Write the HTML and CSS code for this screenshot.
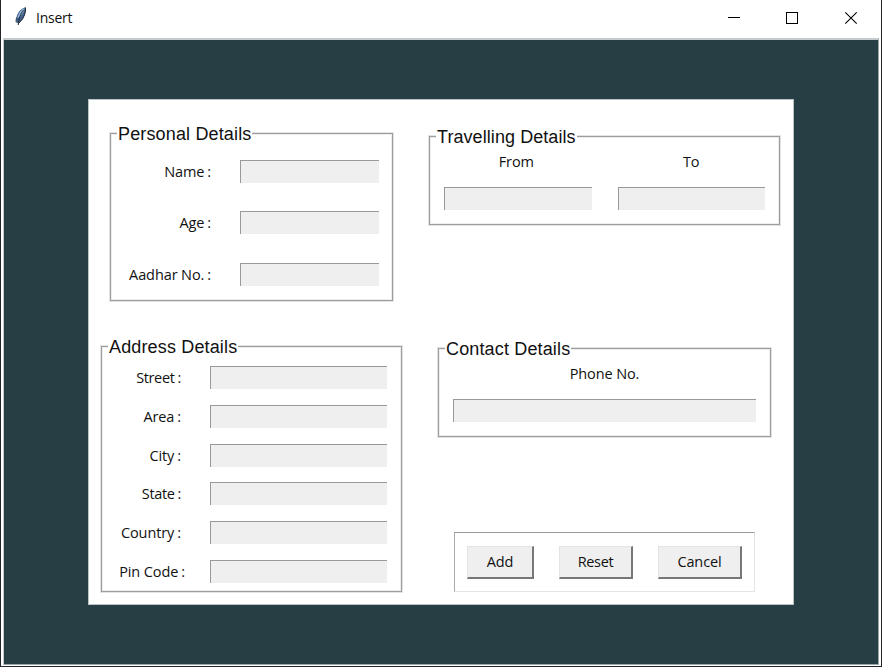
FILE: index.html
```html
<!DOCTYPE html>
<html lang="en">
<head>
<meta charset="utf-8">
<title>Insert</title>
<link rel="stylesheet" href="styles.css">
</head>
<body>
<div class="window">
  <header class="titlebar">
    <svg class="feather" width="14" height="22" viewBox="0 0 14 22">
      <path d="M11.500 1.200C7.500 2 3.600 6 2.600 11L2 15.500l2 1.500c3-1.500 5.500-4.500 6.500-8 .8-2.800 1.600-5.500 1-7.800z" fill="#42658f"/>
      <path d="M10.500 2C7 3.500 4.500 7 3.500 12l2.500-1 3.500-5z" fill="#9bbadc"/>
      <path d="M9.500 4C6.500 8 4.800 12 4.200 19M11.300 1.500c1 3-.8 8-2.800 11.500L5 17" fill="none" stroke="#172334" stroke-width="1"/>
      <path d="M2.500 11.500 2 15.500l1.500 1.500" fill="none" stroke="#30445c" stroke-width="1"/>
    </svg>
    <span class="title">Insert</span>
    <svg class="controls" width="131" height="14" viewBox="0 0 131 14" fill="none" stroke="#000">
      <path d="M0 6.500h12M58.500 1.500h11v11h-11z" shape-rendering="crispEdges"/>
      <path d="M117.300 1.300l11.400 11.400M128.700 1.300l-11.400 11.400" stroke-width="1.100"/>
    </svg>
  </header>
  <main class="client">
    <div class="panel">
      <div class="column left">
        <section class="group personal">
          <h2 class="legend">Personal Details</h2>
          <div class="rows">
            <label for="name">Name<i>:</i></label><input id="name">
            <label for="age">Age<i>:</i></label><input id="age">
            <label for="aadhar">Aadhar No.<i>:</i></label><input id="aadhar">
          </div>
        </section>
        <section class="group address">
          <h2 class="legend">Address Details</h2>
          <div class="rows">
            <label for="street" class="tight">Street<i>:</i></label><input id="street">
            <label for="area">Area<i>:</i></label><input id="area">
            <label for="city">City<i>:</i></label><input id="city">
            <label for="state" class="tight">State<i>:</i></label><input id="state">
            <label for="country">Country<i>:</i></label><input id="country">
            <label for="pin" class="pin">Pin Code<i>:</i></label><input id="pin">
          </div>
        </section>
      </div>
      <div class="column right">
        <section class="group travel">
          <h2 class="legend">Travelling Details</h2>
          <div class="pair">
            <div class="field"><label for="from">From</label><input id="from"></div>
            <div class="field"><label for="to">To</label><input id="to"></div>
          </div>
        </section>
        <section class="group contact">
          <h2 class="legend">Contact Details</h2>
          <div class="pair">
            <div class="field"><label for="phone">Phone No.</label><input id="phone"></div>
          </div>
        </section>
        <div class="actions">
          <button class="add">Add</button>
          <button class="reset tight">Reset</button>
          <button class="cancel">Cancel</button>
        </div>
      </div>
    </div>
  </main>
</div>
</body>
</html>
```
FILE: styles.css
```css
* { box-sizing: border-box; }
body {
  margin: 0;
  font: 14.5px/20px "Open Sans", "Noto Sans", sans-serif;
  letter-spacing: -0.1px;
  color: #111;
  overflow: hidden;
}
.window {
  width: 882px;
  height: 667px;
  display: flex;
  flex-direction: column;
  background: #fff;
  border: 1px solid #242428;
  border-top: 0;
}
.titlebar {
  height: 38px;
  display: flex;
  align-items: flex-start;
  padding: 6px 22px 0 13px;
}
.title { margin: 2px 0 0 8px; font-size: 14px; letter-spacing: -0.25px; }
.controls { margin: 5px 0 0 auto; }
.client {
  flex: 1;
  margin: 0 2px 1px 2px;
  padding: 59px 0 0 84px;
  background: #273f44;
  border: 1px solid #9aa5a7;
  border-top: 2px solid #c5cbcc;
  border-left-color: #c5cbcc;
}
.panel {
  width: 706px;
  height: 506px;
  display: flex;
  background: #fff;
  border: 1px solid #b9c4c6;
}
.column { display: flex; flex-direction: column; align-items: center; }
.left { width: 301px; margin-left: 12px; padding-top: 33px; }
.right { width: 351px; margin-left: 27px; padding-top: 36px; }
.group { border: 1px solid #9d9d9d; box-shadow: 0 0 0 1px #e3e3e3, inset 0 0 0 1px #ededed; }
.legend {
  width: max-content;
  height: 22px;
  margin: -11px 0 0 6px;
  padding: 0 1px;
  font: 18px/22px "Liberation Sans", Arial, sans-serif;
  letter-spacing: 0.15px;
  background: #fff;
}
.travel .legend { letter-spacing: 0.07px; }
input {
  width: 100%;
  height: 23px;
  padding: 0 3px;
  font: inherit;
  background: #efefef;
  border: 1px solid #999;
  border-width: 1px 0 0 1px;
  border-radius: 0;
  outline: 0;
}
.rows { display: grid; align-items: start; }
.rows label { text-align: right; padding-top: 2px; white-space: nowrap; }
.rows i { font-style: normal; margin-left: 3px; }
.rows .tight, .actions .tight { letter-spacing: -0.35px; }
.personal { width: 283px; height: 168px; }
.personal .rows {
  grid-template-columns: 100px 139px;
  grid-auto-rows: 51.4px;
  column-gap: 29px;
  padding-top: 15px;
}
.address { width: 301px; height: 246px; margin-top: 45px; }
.address .rows {
  grid-template-columns: 79px 177px;
  grid-auto-rows: 38.8px;
  column-gap: 29px;
  padding-top: 8px;
}
.address .pin { margin-right: -4px; }
.travel { width: 351px; height: 89px; }
.contact { width: 333px; height: 89px; margin-top: 123px; }
.pair { display: flex; gap: 26px; padding: 4px 14px 0; }
.field { flex: 1; display: flex; flex-direction: column; text-align: center; gap: 15px; }
.travel .field:first-child label { margin-right: 3px; }
.actions {
  width: 301px;
  height: 60px;
  margin-top: 95px;
  display: flex;
  align-items: flex-start;
  padding: 13px 12px 0;
  gap: 25px;
  border: 1px solid #e3e3e3;
  border-top-color: #999;
  border-left-color: #aaa;
}
button {
  height: 33px;
  padding: 0 0 1px;
  font: inherit;
  letter-spacing: inherit;
  color: inherit;
  background: #efefef;
  border: 1px solid #e3e3e3;
  border-right: 2px solid #777;
  border-bottom: 2px solid #777;
  border-radius: 0;
}
.add { width: 67px; }
.reset { width: 74px; }
.cancel { width: 84px; }
```
